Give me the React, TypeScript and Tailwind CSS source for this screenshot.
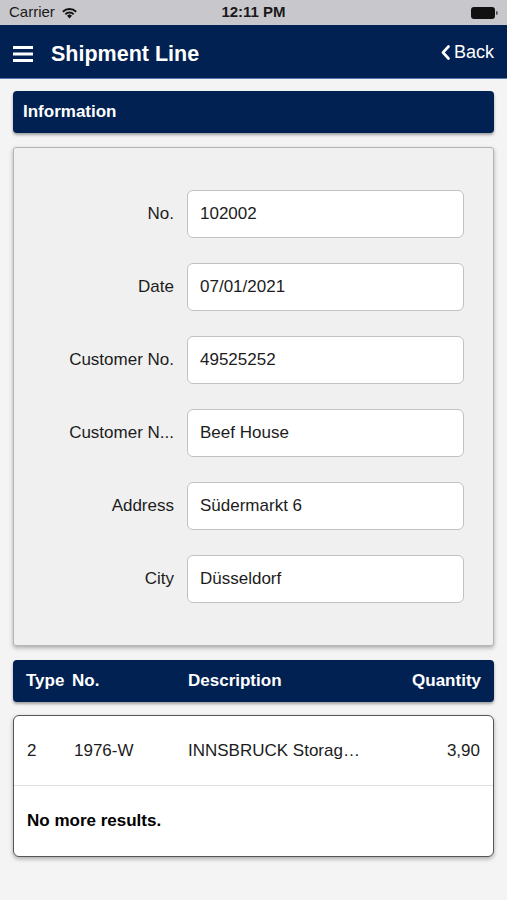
import React from 'react';

const fields = [
  { label: 'No.', value: '102002' },
  { label: 'Date', value: '07/01/2021' },
  { label: 'Customer No.', value: '49525252' },
  { label: 'Customer N...', value: 'Beef House' },
  { label: 'Address', value: 'Südermarkt 6' },
  { label: 'City', value: 'Düsseldorf' },
];

const App: React.FC = () => {
  return (
    <div className="min-h-[900px] bg-[#f4f4f4] font-['Liberation_Sans',Arial,sans-serif] text-black">
      {/* Status bar */}
      <div className="h-[25px] bg-[#c8c8cc] flex items-center justify-between px-[9px] text-[15px]">
        <div className="flex items-center gap-[6px] w-[150px]">
          <span className="text-[#1a1a1a]">Carrier</span>
          <svg width="17" height="12" viewBox="0 0 17 12">
            <path d="M8.5 11.5 L6 8.8 A3.6 3.6 0 0 1 11 8.8 Z" fill="#111" />
            <path d="M3.7 6.6 A6.8 6.8 0 0 1 13.3 6.6 L12 7.9 A5 5 0 0 0 5 7.9 Z" fill="#111" />
            <path d="M1.2 4.1 A10.4 10.4 0 0 1 15.8 4.1 L14.5 5.4 A8.6 8.6 0 0 0 2.5 5.4 Z" fill="#111" />
          </svg>
        </div>
        <span className="font-bold text-[15px] text-[#1a1a1a]">12:11 PM</span>
        <div className="w-[150px] flex justify-end items-center">
          <div className="w-[24px] h-[12px] rounded-[3px] bg-[#111]" />
          <div className="w-[2px] h-[4px] bg-[#555] rounded-r-sm ml-[1px]" />
        </div>
      </div>

      {/* Nav bar */}
      <div className="h-[54px] bg-[#002152] border-b border-[#5a7bb0] flex items-center pt-[6px] pl-[13px] pr-[13px]">
        <svg width="20" height="18" viewBox="0 0 20 18" className="mr-[18px] -mt-[2px]">
          <rect x="0" y="1" width="20" height="3" fill="#fff" />
          <rect x="0" y="7.5" width="20" height="3" fill="#fff" />
          <rect x="0" y="14" width="20" height="3" fill="#fff" />
        </svg>
        <span className="text-white font-bold text-[21.5px]">Shipment Line</span>
        <div className="ml-auto flex items-center gap-[4px] text-white text-[18px] -mt-[4px]">
          <svg width="9" height="15" viewBox="0 0 9 15">
            <path d="M7.5 1.5 L2 7.5 L7.5 13.5" stroke="#fff" strokeWidth="2.6" fill="none" strokeLinecap="round" strokeLinejoin="round" />
          </svg>
          <span>Back</span>
        </div>
      </div>

      <div className="px-[13px] pt-[12px] flex flex-col">
        {/* Information header */}
        <div className="h-[42px] bg-[#002152] rounded-[4px] shadow-[0_2px_3px_rgba(0,0,0,0.35)] flex items-center px-[10px]">
          <span className="text-white font-bold text-[17px]">Information</span>
        </div>

        {/* Form panel */}
        <div className="mt-[14px] bg-[#f0f0f0] border border-[#b5b5b5] rounded-[3px] shadow-[0_2px_4px_rgba(0,0,0,0.3)] pt-[42px] pb-[42px] flex flex-col gap-[25px]">
          {fields.map((f) => (
            <div key={f.label} className="flex items-center">
              <span className="w-[160px] text-right text-[17px] text-[#1c1c1c]">{f.label}</span>
              <div className="ml-[13px] w-[277px] h-[48px] bg-white border border-[#c2c2c2] rounded-[6px] flex items-center px-[12px] text-[17px] text-[#1c1c1c]">
                {f.value}
              </div>
            </div>
          ))}
        </div>

        {/* Table header */}
        <div className="mt-[14px] h-[42px] bg-[#002152] rounded-[4px] shadow-[0_2px_3px_rgba(0,0,0,0.35)] flex items-center text-white font-bold text-[17px] px-[13px]">
          <span className="w-[46px]">Type</span>
          <span className="w-[116px]">No.</span>
          <span>Description</span>
          <span className="ml-auto">Quantity</span>
        </div>

        {/* Results */}
        <div className="mt-[13px] bg-white border border-[#555] rounded-[6px] shadow-[0_2px_4px_rgba(0,0,0,0.3)] flex flex-col">
          <div className="h-[70px] flex items-center px-[13px] text-[17px] text-[#1c1c1c] border-b border-[#e0e0e0]">
            <span className="w-[47px]">2</span>
            <span className="w-[114px]">1976-W</span>
            <span>INNSBRUCK Storag…</span>
            <span className="ml-auto">3,90</span>
          </div>
          <div className="h-[70px] flex items-center px-[13px] font-bold text-[17px]">
            No more results.
          </div>
        </div>
      </div>
    </div>
  );
};

export default App;
